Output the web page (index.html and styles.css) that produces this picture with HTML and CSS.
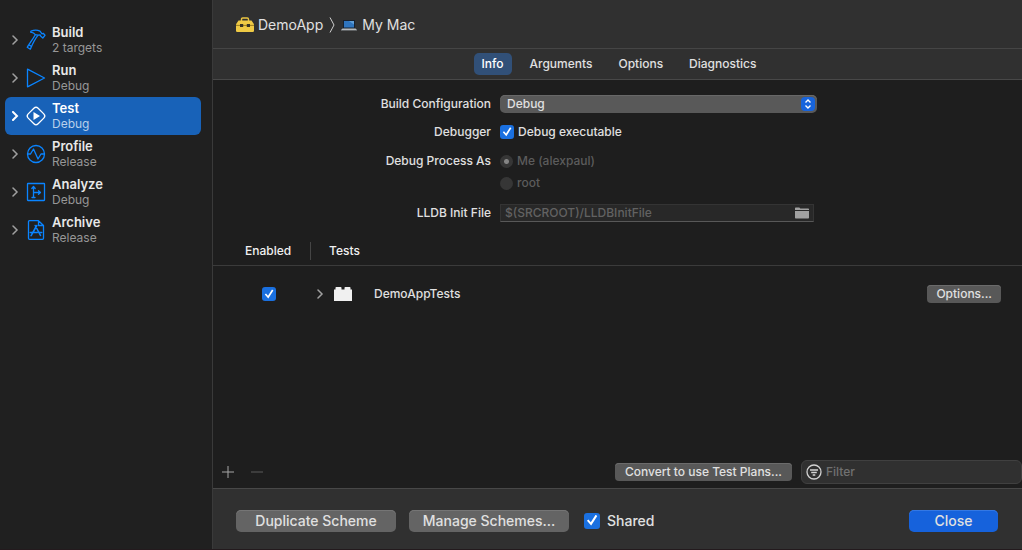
FILE: index.html
```html
<!DOCTYPE html>
<html lang="en">
<head>
<meta charset="utf-8">
<title>Edit Scheme</title>
<link rel="stylesheet" href="styles.css">
</head>
<body>
<div class="window">
  <nav class="sidebar" aria-label="Scheme actions">
    <button class="action" type="button">
      <svg class="chevron" viewBox="0 0 8 10"><path d="M2 1l4 4-4 4"/></svg>
      <svg class="icon" viewBox="0 0 20 20"><path d="M5 1.200C8 0 11.500 0 14 1.200L16 3.800L17.200 3.300L19 5.300L16.800 8L14.800 6.200L14.200 4.900L12.100 5.200C8.500 9.500 6.500 14 4.300 19.200L1.200 17.300C4 12.800 7 9 9.300 4.700C8.200 3 6.800 2.500 4.600 2.200ZM9.300 4.700L12.100 5.200M3 15l2.500 1.400"/></svg>
      <span class="label"><span class="name">Build</span><span class="detail">2 targets</span></span>
    </button>
    <button class="action" type="button">
      <svg class="chevron" viewBox="0 0 8 10"><path d="M2 1l4 4-4 4"/></svg>
      <svg class="icon" viewBox="0 0 20 20"><path d="M1.500 1.200v17.600l17-8.800z"/></svg>
      <span class="label"><span class="name">Run</span><span class="detail">Debug</span></span>
    </button>
    <button class="action selected" type="button" aria-current="true">
      <svg class="chevron" viewBox="0 0 8 10"><path d="M2 1l4 4-4 4"/></svg>
      <svg class="icon" viewBox="0 0 20 20"><rect x="3" y="3" width="14" height="14" rx="3" transform="rotate(45 10 10)"/><path class="solid" d="M7.500 6v8l6.500-4z"/></svg>
      <span class="label"><span class="name">Test</span><span class="detail">Debug</span></span>
    </button>
    <button class="action" type="button">
      <svg class="chevron" viewBox="0 0 8 10"><path d="M2 1l4 4-4 4"/></svg>
      <svg class="icon" viewBox="0 0 20 20"><circle cx="10" cy="10" r="8.500"/><path d="M1.500 10h3L7.500 5l4.500 10 3-5h3.500"/></svg>
      <span class="label"><span class="name">Profile</span><span class="detail">Release</span></span>
    </button>
    <button class="action" type="button">
      <svg class="chevron" viewBox="0 0 8 10"><path d="M2 1l4 4-4 4"/></svg>
      <svg class="icon" viewBox="0 0 20 20"><rect x="1.500" y="1.500" width="17" height="17" rx=".5"/><path d="M7.500 15.500V5M5.800 6.500l1.700-2 1.700 2M7.500 10.500H14M12.500 8.700l2 1.800-2 1.800M6 15.500h3"/></svg>
      <span class="label"><span class="name">Analyze</span><span class="detail">Debug</span></span>
    </button>
    <button class="action" type="button">
      <svg class="chevron" viewBox="0 0 8 10"><path d="M2 1l4 4-4 4"/></svg>
      <svg class="icon" viewBox="0 0 20 20"><path d="M12.500.7H3.500a1 1 0 0 0-1 1v16.600a1 1 0 0 0 1 1h13a1 1 0 0 0 1-1V5.500zV5.500h5"/><path class="bold" d="M10.800 5.500L6 14M9.200 5.500L14.500 15.500M4.300 12.500h7M13.500 12.500h2.200M5.600 14.800l-.5.900"/></svg>
      <span class="label"><span class="name">Archive</span><span class="detail">Release</span></span>
    </button>
  </nav>

  <main class="main">
    <header class="path">
      <svg class="toolbox" viewBox="0 0 18 16"><path d="M5.500 4V2.200Q5.500 1 6.700 1h4.600q1.200 0 1.200 1.200V4" fill="none" stroke="#e9c341" stroke-width="1.400"/><path d="M2.500 3.500h13L18 7.300v6.500q0 1.200-1.200 1.200H1.200Q0 15 0 13.800V7.300z" fill="#efca45"/><path d="M0 8.400h18" stroke="#9b7d20"/><path d="M4 7h3.200v3H4zM10.800 7H14v3h-3.200z" fill="#363225"/></svg>
      <span>DemoApp</span>
      <svg class="divider" viewBox="0 0 6 16"><path d="M1 .5L5 8l-4 7.500"/></svg>
      <svg class="laptop" viewBox="0 0 16 12"><path d="M2 1h12v8.500H2z" fill="#16202e"/><path d="M3 2h10v6.500H3z" fill="#2f74bd"/><path d="M8 2h5v3.500z" fill="#5f9fd8"/><path d="M1.500 9.500h13L16 11H0z" fill="#b4b8bb"/><path d="M0 11h16v.8H0z" fill="#6c7073"/></svg>
      <span>My Mac</span>
    </header>
    <div class="tabs" role="tablist">
      <button class="tab active" type="button" role="tab" aria-selected="true">Info</button>
      <button class="tab" type="button" role="tab" aria-selected="false">Arguments</button>
      <button class="tab" type="button" role="tab" aria-selected="false">Options</button>
      <button class="tab" type="button" role="tab" aria-selected="false">Diagnostics</button>
    </div>

    <section class="content">
      <form class="settings">
        <label class="caption" for="config">Build Configuration</label>
        <div class="popup">
          <select id="config"><option>Debug</option><option>Release</option></select>
          <svg class="stepper" viewBox="0 0 14 14"><path d="M4.500 5.500L7 3l2.500 2.500M4.500 8.500L7 11l2.500-2.500"/></svg>
        </div>
        <span class="caption">Debugger</span>
        <label class="choice"><input class="check" type="checkbox" checked>Debug executable</label>
        <span class="caption process">Debug Process As</span>
        <div class="radios process">
          <label class="choice off"><input class="radio" type="radio" name="user" checked disabled>Me (alexpaul)</label>
          <label class="choice off"><input class="radio" type="radio" name="user" disabled>root</label>
        </div>
        <label class="caption" for="lldb">LLDB Init File</label>
        <div class="file">
          <input id="lldb" type="text" placeholder="$(SRCROOT)/LLDBInitFile">
          <button class="browse" type="button" aria-label="Choose file"><svg viewBox="0 0 14 12"><path d="M0 3V1.200Q0 .5.700.5h3.600l1 1h8Q14 1.500 14 2.200V3zM0 4h14v6.800q0 .7-.7.7H.7q-.7 0-.7-.7z"/></svg></button>
        </div>
      </form>

      <table class="tests">
        <thead><tr><th class="enabled" scope="col"><span>Enabled</span></th><th scope="col">Tests</th><th class="tools"></th></tr></thead>
        <tbody><tr>
          <td class="enabled"><input class="check" type="checkbox" aria-label="Enable DemoAppTests" checked></td>
          <td><div class="bundle">
            <svg class="chevron" viewBox="0 0 8 10"><path d="M2 1l4 4-4 4"/></svg>
            <svg class="brick" viewBox="0 0 18 14"><path d="M0 2.500h1.500V.8Q1.500 0 2.300 0h4.400q.8 0 .8.800v1.700h3V.8q0-.8.8-.8h4.400q.8 0 .8.800v1.700H18V14H0z"/></svg>
            <span>DemoAppTests</span></div></td>
          <td class="tools"><button class="push" type="button">Options...</button></td>
        </tr></tbody>
      </table>

      <div class="toolbar">
        <button class="glyph" type="button" aria-label="Add"><svg viewBox="0 0 12 12"><path d="M6 0v12M0 6h12"/></svg></button>
        <button class="glyph dim" type="button" aria-label="Remove"><svg viewBox="0 0 12 12"><path d="M0 6h12"/></svg></button>
        <button class="push convert" type="button">Convert to use Test Plans...</button>
        <label class="filter">
          <svg viewBox="0 0 16 16"><circle cx="8" cy="8" r="7"/><path d="M4 6h8M5.200 8.500h5.600M6.700 11h2.600"/></svg>
          <input type="text" placeholder="Filter" aria-label="Filter">
        </label>
      </div>
    </section>

    <footer class="footer">
      <button class="large" type="button">Duplicate Scheme</button>
      <button class="large" type="button">Manage Schemes...</button>
      <label class="shared"><input class="check big" type="checkbox" checked>Shared</label>
      <button class="large close" type="button">Close</button>
    </footer>
  </main>
</div>
</body>
</html>
```
FILE: styles.css
```css
* { box-sizing: border-box; }
body {
  margin: 0;
  background: #1e1e1e;
  color: #e0e0e0;
  font: 500 12px/16px Inter, "Liberation Sans", sans-serif;
}
button, input, select { font: inherit; color: inherit; margin: 0; }
button { border: 0; padding: 0; background: none; }
svg { display: block; flex: none; }

.window {
  display: grid;
  grid-template-columns: 212px minmax(0, 1fr);
  min-height: 100vh;
  border-bottom: 1px solid #231a1d;
}

.sidebar { background: #202020; padding: 21px 11px 0 5px; }
.action {
  display: flex;
  align-items: center;
  width: 100%;
  height: 38px;
  padding-left: 6px;
  border-radius: 6px;
  text-align: left;
}
.chevron {
  width: 8px;
  height: 10px;
  fill: none;
  stroke: #a0a0a0;
  stroke-width: 1.5;
  stroke-linecap: round;
}
.icon {
  width: 20px;
  height: 20px;
  margin: 0 6px 0 7px;
  overflow: visible;
  fill: none;
  stroke: #0a84ff;
  stroke-width: 1.3;
  stroke-linejoin: round;
  stroke-linecap: round;
}
.icon .bold { stroke-width: 1.6; }
.icon .solid { fill: #fff; stroke: none; }
.label { display: flex; flex-direction: column; }
.name { font-size: 13px; font-weight: 600; color: #e8e8e8; }
.detail { font-weight: 400; color: #979797; }
.selected { background: #1862b8; }
.selected .chevron, .selected .icon { stroke: #fff; }
.selected .chevron { stroke-width: 2; }
.selected .name { color: #fff; }
.selected .detail { color: #b9d0ea; }

.main {
  display: flex;
  flex-direction: column;
  min-width: 0;
  border-left: 1px solid #3a3a3a;
  background: #303030;
}
.path {
  display: flex;
  align-items: center;
  height: 49px;
  padding: 1px 0 0 23px;
  border-bottom: 1px solid #454545;
  font-size: 14px;
  font-weight: 400;
}
.toolbox { width: 18px; height: 16px; margin-right: 4px; }
.divider {
  width: 6px;
  height: 16px;
  margin: 0 6px;
  fill: none;
  stroke: #cfcfcf;
}
.laptop { width: 16px; height: 12px; margin-right: 5px; }

.tabs {
  display: flex;
  align-items: center;
  justify-content: center;
  gap: 10px;
  height: 31px;
  padding-left: 3px;
  border-bottom: 1px solid #484848;
}
.tab { height: 22px; padding: 0 8px; border-radius: 5px; }
.tab.active { background: #315078; color: #fff; }

.content {
  display: flex;
  flex: 1;
  flex-direction: column;
  background: #1e1e1e;
}
.settings {
  display: grid;
  grid-template-columns: 278px minmax(0, 317px);
  grid-auto-rows: min-content;
  gap: 10px 9px;
  padding: 15px 15px 15px 0;
}
.caption { line-height: 18px; text-align: right; }
.popup { position: relative; }
.popup select {
  display: block;
  width: 100%;
  height: 18px;
  padding: 0 24px 0 7px;
  border: 0;
  border-radius: 5px;
  appearance: none;
  background: #595959;
  box-shadow: inset 0 1px #686868;
}
.stepper {
  position: absolute;
  top: 2px;
  right: 2px;
  width: 14px;
  height: 14px;
  border-radius: 4px;
  background: #1764dc;
  fill: none;
  stroke: #fff;
  stroke-width: 1.4;
  pointer-events: none;
}
.choice { display: flex; align-items: center; height: 18px; gap: 4px; }
.check {
  display: inline-grid;
  place-items: center;
  width: 14px;
  height: 14px;
  border-radius: 3px;
  appearance: none;
  background: #1a70e0;
}
.check:checked::before {
  content: "";
  width: 10px;
  height: 10px;
  background: #fff;
  clip-path: polygon(8% 53%, 20% 42%, 40% 65%, 80% 3%, 94% 13%, 43% 92%);
}
.check.big { width: 16px; height: 16px; }
.check.big::before { width: 12px; height: 12px; }
.process { padding-top: 1px; }
.radios { display: flex; flex-direction: column; gap: 4px; padding-bottom: 2px; }
.off { color: #5c5c5c; }
.radio {
  width: 13px;
  height: 13px;
  border-radius: 50%;
  appearance: none;
  background: #363636;
}
.radio:checked { background: radial-gradient(circle, #858585 2px, #363636 3px); }
.file {
  display: flex;
  align-items: center;
  height: 18px;
  margin-right: 3px;
  padding: 0 4px;
  border: 1px solid #343434;
  border-bottom-color: #585858;
  background: #282828;
}
.file input {
  flex: 1;
  min-width: 0;
  padding: 0;
  border: 0;
  background: none;
}
::placeholder { color: #626262; opacity: 1; }
.browse svg { width: 14px; height: 12px; fill: #a0a0a0; }

.tests { width: 100%; border-collapse: collapse; table-layout: fixed; }
.tests th {
  height: 28px;
  padding: 0 0 0 18px;
  border-bottom: 1px solid #3b3b3b;
  font-weight: 500;
  text-align: left;
  color: #f0f0f0;
}
.tests td { height: 58px; padding: 0 0 0 5px; }
.tests .enabled { width: 98px; padding: 0; }
.tests th.enabled span {
  display: block;
  padding-left: 32px;
  border-right: 1px solid #454545;
  line-height: 18px;
}
.tests td.enabled { padding-left: 49px; }
.tests td.enabled .check { display: grid; }
.tests .tools { width: 120px; padding-right: 21px; text-align: right; }
.bundle { display: flex; align-items: center; }
.brick { width: 18px; height: 14px; margin: 0 22px 0 10px; fill: #f0f0f0; }
.push {
  height: 18px;
  padding: 0 9px;
  border-radius: 4px;
  background: #585858;
  box-shadow: inset 0 1px #6b6b6b;
}
.toolbar {
  display: flex;
  align-items: center;
  margin-top: auto;
  padding: 0 0 4px 9px;
}
.glyph { margin-right: 17px; }
.glyph svg { width: 12px; height: 12px; fill: none; stroke: #a6a6a6; }
.glyph.dim svg { stroke: #5b5b5b; }
.convert { margin: 0 9px 0 auto; padding: 0 10px; }
.filter {
  display: flex;
  align-items: center;
  gap: 4px;
  width: 221px;
  height: 24px;
  padding: 0 4px;
  border: 1px solid #404040;
  border-radius: 6px;
  background: #303030;
}
.filter svg {
  width: 16px;
  height: 16px;
  fill: none;
  stroke: #d2d2d2;
  stroke-width: 1.3;
}
.filter input {
  flex: 1;
  min-width: 0;
  padding: 0;
  border: 0;
  background: none;
}
.filter ::placeholder { color: #707070; }

.footer {
  display: flex;
  align-items: center;
  gap: 13px;
  height: 61px;
  padding: 3px 24px 0 23px;
  border-top: 1px solid #484848;
  font-size: 14px;
}
.large {
  min-width: 160px;
  height: 22px;
  border-radius: 5px;
  background: #646464;
  box-shadow: inset 0 1px #757575;
}
.shared { display: flex; align-items: center; gap: 7px; padding-left: 2px; }
.close {
  min-width: 89px;
  margin-left: auto;
  background: #1662dc;
  box-shadow: inset 0 1px #3478e4;
}
```
